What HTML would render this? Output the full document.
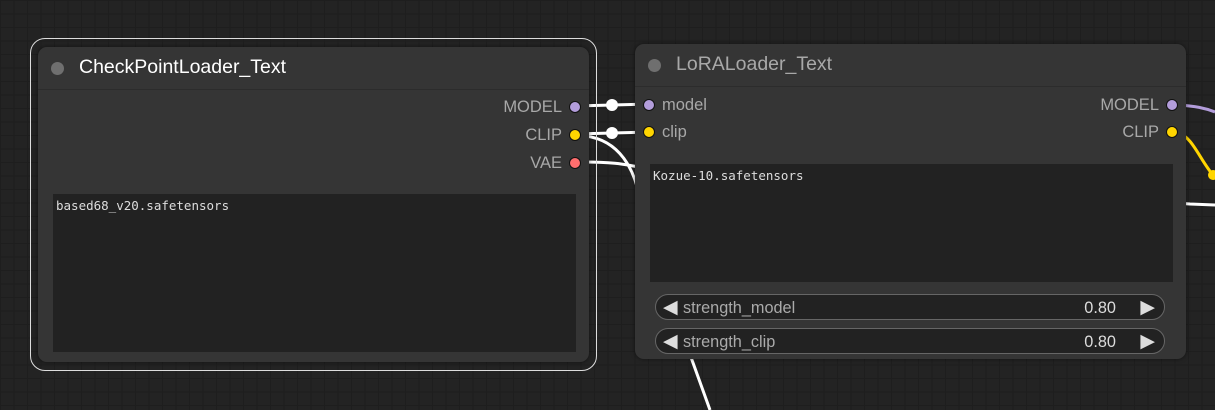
<!DOCTYPE html><html><head><style>
body{margin:0;width:1215px;height:410px;overflow:hidden;background-color:#232323;
background-image:linear-gradient(90deg,#1e1e1e 1px,transparent 1px),linear-gradient(#1e1e1e 1px,transparent 1px);background-size:13.5px 13.5px;position:relative;font-family:"Liberation Sans",sans-serif}
.n{position:absolute;background:#353535;border-radius:9px;box-shadow:0 0 4px rgba(0,0,0,.5)}
.t{position:absolute;left:0;right:0;top:0;height:42px;border-bottom:1px solid #2c2c2c;border-radius:9px 9px 0 0}
.t .d{position:absolute;left:13px;top:15px;width:13px;height:13px;border-radius:50%;background:#6f6f6f}
.t span{position:absolute;left:41px;top:9px;font-size:19.5px}
.ta{position:absolute;background:#222;color:#ddd;font-family:"DejaVu Sans Mono","Liberation Mono",monospace;font-size:12.5px;padding:4px 3px;box-sizing:border-box}
.lb{position:absolute;font-size:16.5px;color:#a8a8a8}
.dot{position:absolute;width:10px;height:10px;border-radius:50%;border:1px solid #111}
.w{position:absolute;height:26px;border:1px solid #666;border-radius:14px;background:#222;box-sizing:border-box;color:#aaa;font-size:16.3px}
.a{position:absolute;top:1px;color:#ddd;font-size:19px}
</style></head><body>
<svg width="1215" height="410" style="position:absolute;left:0;top:0">
<g fill="none" stroke-width="3">
<path d="M575 106 L648 104" stroke="#fff"/>
<path d="M575 134 L648 132" stroke="#fff"/>
<path d="M585 162 C620 162 630 166 640 167 L1190 204 L1215 205" stroke="#fff"/>
<path d="M585 136 C620 140 635 170 640 200 L692 360 L710 410" stroke="#fff"/>
<path d="M1178 105 C1195 106 1205 108 1215 112" stroke="#b39ddb"/>
<path d="M1178 133 C1192 136 1200 160 1213 175" stroke="#ffd500"/>
</g>
<circle cx="612" cy="105" r="6" fill="#fff"/><circle cx="612" cy="133" r="6" fill="#fff"/>
<circle cx="1213" cy="175" r="5" fill="#ffd500"/>
</svg>
<div style="position:absolute;left:30px;top:38px;width:565px;height:331px;border:1.5px solid #ddd;border-radius:15px"></div>
<div class="n" style="left:38px;top:47px;width:551px;height:315px">
<div class="t"><div class="d"></div><span style="color:#fff">CheckPointLoader_Text</span></div>
<div class="lb" style="right:27px;top:51px">MODEL</div><div class="dot" style="right:8px;top:54px;background:#b39ddb"></div>
<div class="lb" style="right:27px;top:79px">CLIP</div><div class="dot" style="right:8px;top:82px;background:#ffd500"></div>
<div class="lb" style="right:27px;top:107px">VAE</div><div class="dot" style="right:8px;top:110px;background:#ff6e6e"></div>
<div class="ta" style="left:15px;top:147px;width:523px;height:158px">based68_v20.safetensors</div>
</div>
<div class="n" style="left:635px;top:44px;width:551px;height:315px">
<div class="t"><div class="d"></div><span style="color:#a8a8a8">LoRALoader_Text</span></div>
<div class="dot" style="left:8px;top:55px;background:#b39ddb"></div><div class="lb" style="left:27px;top:52px">model</div>
<div class="dot" style="left:8px;top:82px;background:#ffd500"></div><div class="lb" style="left:27px;top:79px">clip</div>
<div class="lb" style="right:27px;top:52px">MODEL</div><div class="dot" style="right:8px;top:55px;background:#b39ddb"></div>
<div class="lb" style="right:27px;top:79px">CLIP</div><div class="dot" style="right:8px;top:82px;background:#ffd500"></div>
<div class="ta" style="left:15px;top:120px;width:523px;height:118px">Kozue-10.safetensors</div>
<div class="w" style="left:20px;top:250px;width:510px"><span class="a" style="left:7px">◀</span><span style="position:absolute;left:27px;top:4px">strength_model</span><span style="position:absolute;right:48px;top:4px;color:#ddd">0.80</span><span class="a" style="right:9px">▶</span></div>
<div class="w" style="left:20px;top:284px;width:510px"><span class="a" style="left:7px">◀</span><span style="position:absolute;left:27px;top:4px">strength_clip</span><span style="position:absolute;right:48px;top:4px;color:#ddd">0.80</span><span class="a" style="right:9px">▶</span></div>
</div>
</body></html>
